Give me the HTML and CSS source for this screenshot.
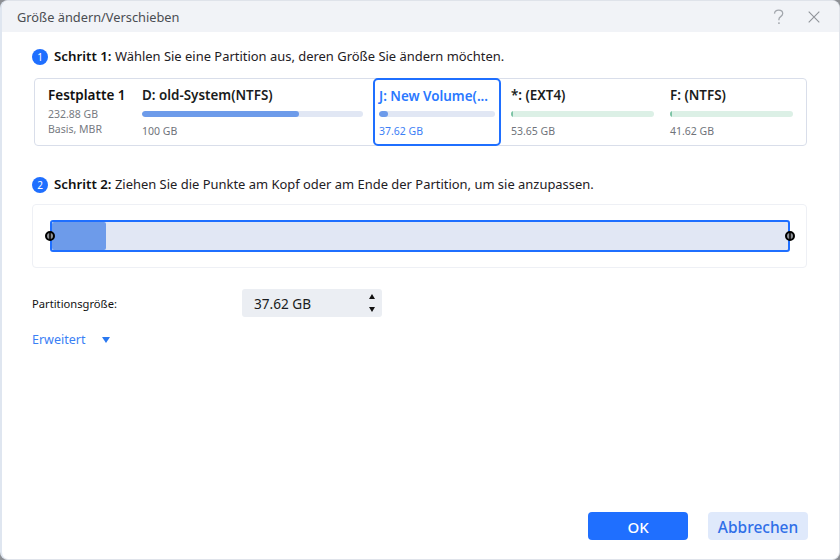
FILE: index.html
```html
<!DOCTYPE html>
<html lang="de">
<head>
<meta charset="utf-8">
<title>Größe ändern/Verschieben</title>
<link rel="stylesheet" href="styles.css">
</head>
<body>
<div class="dialog">
  <header class="titlebar">
    <span class="title">Größe ändern/Verschieben</span>
    <div class="win-icons">
      <svg class="icon" width="14" height="16" viewBox="0 0 14 16"><path d="M2.5 4.6C2.7 2.6 4.3 1.2 6.7 1.2c2.500 0 4 1.400 4 3.300 0 1.500-.8 2.300-2 3.100-1.200.8-1.800 1.400-1.800 2.900v.7" fill="none" stroke="#a3a7ad" stroke-width="1.300"/><rect x="6.200" y="13.300" width="1.500" height="1.700" fill="#a3a7ad"/></svg>
      <svg class="icon" width="12" height="12" viewBox="0 0 12 12"><path d="M.7.7l10.600 10.600M11.300.7L.7 11.300" fill="none" stroke="#8f9399" stroke-width="1.100"/></svg>
    </div>
  </header>
  <main class="content">
    <p class="step"><span class="badge">1</span><span><b>Schritt 1:</b> Wählen Sie eine Partition aus, deren Größe Sie ändern möchten.</span></p>
    <section class="disk">
      <div class="disk-info">
        <div class="disk-name">Festplatte 1</div>
        <div class="disk-sub">232.88 GB</div>
        <div class="disk-sub">Basis, MBR</div>
      </div>
      <div class="part part-d">
        <div class="part-name">D: old-System(NTFS)</div>
        <div class="track"><div class="fill fill-blue" style="width:71%"></div></div>
        <div class="part-size">100 GB</div>
      </div>
      <div class="part part-j">
        <div class="part-name">J: New Volume(...</div>
        <div class="track"><div class="fill fill-blue" style="width:8%"></div></div>
        <div class="part-size">37.62 GB</div>
      </div>
      <div class="part part-e">
        <div class="part-name">*: (EXT4)</div>
        <div class="track track-green"><div class="fill fill-green" style="width:2px"></div></div>
        <div class="part-size">53.65 GB</div>
      </div>
      <div class="part part-f">
        <div class="part-name">F: (NTFS)</div>
        <div class="track track-green"><div class="fill fill-green" style="width:2px"></div></div>
        <div class="part-size">41.62 GB</div>
      </div>
    </section>
    <p class="step step-two"><span class="badge">2</span><span><b>Schritt 2:</b> Ziehen Sie die Punkte am Kopf oder am Ende der Partition, um sie anzupassen.</span></p>
    <section class="resizer">
      <div class="range">
        <div class="range-used"></div>
        <span class="handle handle-l"></span>
        <span class="handle handle-r"></span>
      </div>
    </section>
    <div class="size-row">
      <span class="size-label">Partitionsgröße:</span>
      <div class="spin">
        <span class="spin-value">37.62 GB</span>
        <span class="spin-arrows"><i class="up"></i><i class="down"></i></span>
      </div>
    </div>
    <div class="advanced"><span>Erweitert</span><i class="adv-arrow"></i></div>
  </main>
  <footer class="actions">
    <button class="btn btn-primary">OK</button>
    <button class="btn btn-soft">Abbrechen</button>
  </footer>
</div>
</body>
</html>
```
FILE: styles.css
```css
* { box-sizing: border-box; }
html, body { margin: 0; height: 100%; background: #8c8f94; }
body { font-family: "Noto Sans", sans-serif; color: #1a1c20; }
.dialog {
  width: 840px; height: 560px; background: #fff; display: flex; flex-direction: column;
  border: 1px solid #dfe3ea; border-left: 2px solid #dfe6f0; border-radius: 8px; overflow: hidden;
}
.titlebar {
  height: 31px; flex: none; background: #f1f3f7; display: flex; align-items: center;
  justify-content: space-between; padding: 0 19px 0 15px;
}
.title { font-size: 12.800px; color: #4a4d52; }
.win-icons { display: flex; align-items: center; gap: 22px; }
.icon { display: block; }
.content { flex: 1; padding: 16px 32px 0 30px; }
.step { margin: 0; display: flex; align-items: center; gap: 6px; font-size: 12.950px; line-height: 17px; height: 17px; color: #1e2024; }
.step b { font-size: 13.300px; font-weight: 600; color: #111; }
.badge {
  width: 16px; height: 16px; border-radius: 50%; background: #1f6fff; color: #fff; flex: none;
  font-size: 10px; line-height: 16px; text-align: center;
}
.disk {
  margin: 13px 0 0 2px; height: 68px; border: 1px solid #d9deea; border-radius: 4px; display: flex; align-items: stretch;
}
.disk-info { width: 107px; flex: none; padding: 7px 0 0 13px; }
.disk-name { font-size: 13.500px; font-weight: 600; line-height: 18px; color: #111; margin-bottom: 3px; }
.disk-sub { font-size: 10.500px; line-height: 15px; color: #777b82; }
.part { flex: none; padding-top: 7px; }
.part-name { font-size: 13.400px; font-weight: 600; line-height: 18px; color: #1a1c20; white-space: nowrap; }
.part-size { font-size: 10.500px; line-height: 14px; color: #6f737a; margin-top: 7px; }
.track { height: 6px; border-radius: 3px; background: #e1e7f4; margin-top: 7px; overflow: hidden; }
.track-green { background: #dcf0e6; }
.fill { height: 100%; }
.fill-blue { background: #6d9bea; border-radius: 3px; }
.fill-green { background: #7dc3a5; }
.part-d { width: 221px; }
.part-j {
  width: 128px; margin: -1px 0 -1px 10px; padding: 7px 4px 0 4px; border: 2px solid #1f6fff; border-radius: 5px;
}
.part-j .part-name { color: #2a78ff; }
.part-j .track { margin-top: 6px; }
.part-j .part-size { color: #3d80f5; }
.part-e { width: 143px; margin-left: 10px; }
.part-f { width: 123px; margin-left: 16px; }
.step-two { margin-top: 30px; }
.resizer {
  margin: 11px 0 0 0; height: 64px; border: 1px solid #eef0f5; border-radius: 4px; padding: 15px 16px 0 17px;
}
.range {
  position: relative; height: 32px; background: #e1e7f4; border: 2px solid #1f6fff; border-radius: 3px; padding: 0;
}
.range-used { width: 54px; height: 100%; background: #6d9bea; border-radius: 2px; }
.handle {
  position: absolute; top: 50%; width: 10px; height: 10px; margin-top: -5px; border-radius: 50%;
  border: 2px solid #000;
  background: linear-gradient(90deg, #8d9197 0 33%, #222 33% 66%, #8d9197 66%);
}
.handle-l { left: -7px; }
.handle-r { right: -7px; }
.size-row { margin-top: 21px; display: flex; align-items: center; }
.size-label { width: 210px; font-size: 11.200px; color: #111; }
.spin {
  width: 140px; height: 28px; background: #ebeef3; border-radius: 3px; display: flex; align-items: center;
  justify-content: space-between; padding: 0 7px 0 12px;
}
.spin-value { font-size: 13.600px; color: #1a1c20; }
.spin-arrows { display: flex; flex-direction: column; gap: 8px; }
.spin-arrows i { display: block; width: 0; height: 0; border-left: 3.500px solid transparent; border-right: 3.500px solid transparent; }
.spin-arrows .up { border-bottom: 5px solid #111; }
.spin-arrows .down { border-top: 5px solid #111; }
.advanced { margin-top: 14px; display: flex; align-items: center; gap: 17px; font-size: 12.500px; line-height: 17px; color: #3a80f5; }
.adv-arrow { display: block; width: 0; height: 0; border-left: 4px solid transparent; border-right: 4px solid transparent; border-top: 6px solid #2a78f0; }
.actions { flex: none; display: flex; justify-content: flex-end; gap: 20px; padding: 0 31px 19px 0; }
.btn { width: 100px; height: 28px; border: 0; border-radius: 4px; font-family: inherit; font-size: 15px; font-weight: 500; padding: 1px 0 0; }
.btn-primary { background: #1f6fff; color: #fff; }
.btn-soft { background: #dfe9fb; color: #2f6fe8; font-size: 15.500px; }
```
